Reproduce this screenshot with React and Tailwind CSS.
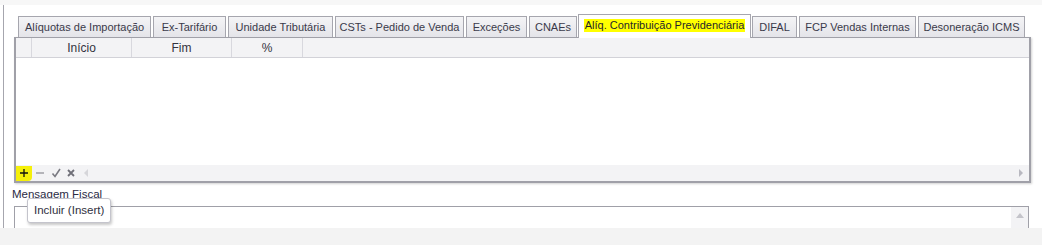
const tabs = [
  { label: "Alíquotas de Importação", w: "w-[133px]" },
  { label: "Ex-Tarifário", w: "w-[73px]" },
  { label: "Unidade Tributária", w: "w-[105px]" },
  { label: "CSTs - Pedido de Venda", w: "w-[129px]" },
  { label: "Exceções", w: "w-[61px]" },
  { label: "CNAEs", w: "w-[48px]" },
  { label: "Alíq. Contribuição Previdenciária", w: "w-[173px]", active: true },
  { label: "DIFAL", w: "w-[45px]" },
  { label: "FCP Vendas Internas", w: "w-[117px]" },
  { label: "Desoneração ICMS", w: "w-[107px]" },
];

function Tab({ label, w, active }) {
  if (active) {
    return (
      <div
        className={`${w} h-[24px] -mx-[1px] -mb-[1px] relative z-10 bg-white border border-b-0 border-[#a6a6ae] flex items-center justify-center pb-[3px] whitespace-nowrap`}>
        <span className="bg-[#ffff00] px-[1px] leading-[13px] text-[#1f1f2a]">{label}</span>
      </div>
    );
  }
  return (
    <div
      className={`${w} h-[21px] bg-gradient-to-b from-[#f4f4f6] to-[#e4e4e9] border border-b-0 border-[#a6a6ae] flex items-center justify-center text-[#3a3a4a] whitespace-nowrap`}>
      {label}
    </div>
  );
}

function NavBar() {
  return (
    <div className="h-[16px] bg-[#f3f3f5] flex items-center">
      <div className="w-[16px] h-[15px] bg-[#f5f00a] rounded-br-[4px] flex items-center justify-center">
        <svg width="10" height="10" viewBox="0 0 10 10">
          <path d="M5 1v8M1 5h8" stroke="#111" strokeWidth="1.3" />
        </svg>
      </div>
      <div className="w-[16px] flex items-center justify-center">
        <svg width="10" height="10" viewBox="0 0 10 10">
          <path d="M1 5h8" stroke="#8a8a92" strokeWidth="1.2" />
        </svg>
      </div>
      <div className="w-[16px] flex items-center justify-center">
        <svg width="10" height="10" viewBox="0 0 10 10">
          <path d="M1.5 5.5l2.5 3L9 1" stroke="#7a7a82" strokeWidth="1.6" fill="none" />
        </svg>
      </div>
      <div className="w-[14px] flex items-center justify-center">
        <svg width="10" height="10" viewBox="0 0 10 10">
          <path d="M2 2l6 6M8 2l-6 6" stroke="#6f6f78" strokeWidth="1.8" />
        </svg>
      </div>
      <div className="ml-[6px] flex-1 flex items-center justify-between pr-[6px]">
        <svg width="5" height="8" viewBox="0 0 5 8">
          <path d="M4 0v8L0 4z" fill="#d6d6da" />
        </svg>
        <svg width="5" height="8" viewBox="0 0 5 8">
          <path d="M1 0v8l4-4z" fill="#b8b8c0" />
        </svg>
      </div>
    </div>
  );
}

export default function App() {
  return (
    <div className="w-[1042px] h-[245px] bg-white flex flex-col overflow-hidden text-[11px] font-['Liberation_Sans',Arial,sans-serif]">
      <div className="h-[5px] bg-[#f7f7f7]" />
      <div className="flex-1 ml-[3px] border-l border-[#a6a6ae] pl-[10px] relative overflow-hidden">
        <div className="flex items-end gap-[2px] mt-[9px] ml-[4px] h-[23px]">
          {tabs.map((t) => (
            <Tab key={t.label} {...t} />
          ))}
        </div>

        <div className="w-[1017px] h-[146px] border-x-2 border-b-2 border-t border-[#a0a0a8] flex flex-col shadow-[1px_1px_2px_rgba(0,0,0,0.18)]">
          <div className="h-[20px] bg-[#f3f3f5] border-b border-[#d2d2d8] flex text-[#333340] text-[12px]">
            <div className="w-[16px] border-r border-[#d8d8de]" />
            <div className="w-[100px] border-r border-[#d8d8de] flex items-center justify-center">Início</div>
            <div className="w-[100px] border-r border-[#d8d8de] flex items-center justify-center">Fim</div>
            <div className="w-[71px] border-r border-[#d8d8de] flex items-center justify-center">%</div>
            <div className="flex-1" />
          </div>
          <div className="flex-1 bg-white" />
          <NavBar />
        </div>

        <div className="mt-[5px] -ml-[2px] leading-[13px] text-[#2a2a44] text-[11.5px]">Mensagem Fiscal</div>

        <div className="mt-[5px] w-[1015px] h-[40px] border border-[#a0a0a8] flex justify-end">
          <div className="w-[17px] bg-[#f3f3f5] flex justify-center pt-[6px]">
            <svg width="8" height="5" viewBox="0 0 8 5">
              <path d="M0 5h8L4 0z" fill="#c4c4ca" />
            </svg>
          </div>
        </div>

        <div className="absolute left-[23px] top-[193px] h-[25px] bg-white border border-[#c4c4cc] rounded-[3px] shadow-[1px_2px_3px_rgba(0,0,0,0.22)] flex items-center px-[6px] text-[#303040] text-[11.5px] whitespace-nowrap">
          Incluir (Insert)
        </div>
      </div>
      <div className="h-[17px] bg-[#f3f3f3]" />
    </div>
  );
}
